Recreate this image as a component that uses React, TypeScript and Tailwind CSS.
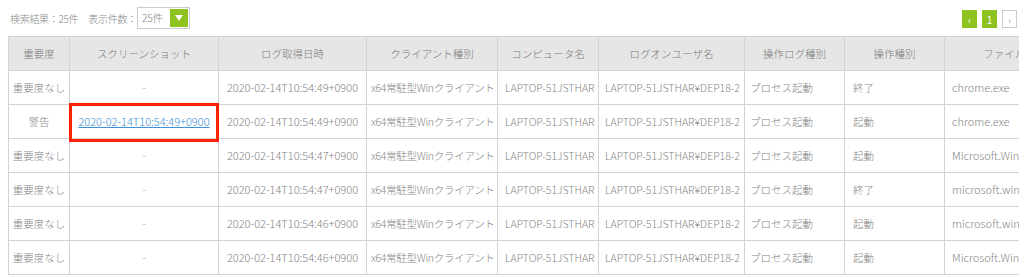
import React from "react";

const cols = [
  { name: "重要度", w: 61 },
  { name: "スクリーンショット", w: 149 },
  { name: "ログ取得日時", w: 148 },
  { name: "クライアント種別", w: 131 },
  { name: "コンピュータ名", w: 101 },
  { name: "ログオンユーザ名", w: 146 },
  { name: "操作ログ種別", w: 100 },
  { name: "操作種別", w: 100 },
  { name: "ファイル名", w: 130 },
];

const rows = [
  ["重要度なし", "-", "2020-02-14T10:54:49+0900", "終了", "chrome.exe"],
  ["警告", "LINK", "2020-02-14T10:54:49+0900", "起動", "chrome.exe"],
  ["重要度なし", "-", "2020-02-14T10:54:47+0900", "起動", "Microsoft.Windows.ShellExperienceHost"],
  ["重要度なし", "-", "2020-02-14T10:54:47+0900", "終了", "microsoft.windows.photos"],
  ["重要度なし", "-", "2020-02-14T10:54:46+0900", "起動", "microsoft.windows.photos"],
  ["重要度なし", "-", "2020-02-14T10:54:46+0900", "起動", "Microsoft.Windows.Photos"],
];

const font = { fontFamily: '"Noto Sans CJK JP", "Noto Sans", sans-serif' };

export default function App() {
  return (
    <div
      className="relative w-[1024px] h-[277px] overflow-hidden bg-white text-[#858585] font-light"
      style={font}
    >
      <div className="flex items-center justify-between h-[36px] pl-[10px] pr-[7px]">
        <div className="flex items-center text-[10px] text-[#8a8a8a] tracking-[-0.3px]">
          <span>検索結果：25件</span>
          <span className="ml-[10px]">表示件数：</span>
          <div className="ml-[0px] flex items-center w-[53px] h-[22px] border border-[#ccc] bg-white">
            <span className="flex-1 pl-[4px] text-[10.5px] text-[#888]">25件</span>
            <div className="w-[18px] h-[18px] mr-[1px] bg-[#8dc21f] flex items-center justify-center">
              <svg width="10" height="8" viewBox="0 0 10 8">
                <path d="M1 1 L9 1 L5 7 Z" fill="#fff" />
              </svg>
            </div>
          </div>
        </div>
        <div className="flex items-center gap-[5px] text-[10px] font-normal mt-[2px]">
          <div className="w-[15px] h-[18px] bg-[#8dc21f] text-white flex items-center justify-center">‹</div>
          <div className="w-[15px] h-[18px] bg-[#8dc21f] text-white flex items-center justify-center">1</div>
          <div className="w-[15px] h-[18px] bg-white border border-[#ccc] text-[#aaa] flex items-center justify-center">›</div>
        </div>
      </div>
      <div className="ml-[8px] w-[1011px] overflow-hidden">
        <table
          className="border-collapse table-fixed text-[10.5px]"
          style={{ width: 1066 }}
        >
          <colgroup>
            {cols.map((c, i) => (
              <col key={i} style={{ width: c.w }} />
            ))}
          </colgroup>
          <thead>
            <tr className="h-[34px] bg-[#e6e6e6]">
              {cols.map((c, i) => (
                <th
                  key={i}
                  className="border border-[#d3d3d3] font-light text-[#7a7a7a] text-[10.5px] text-center whitespace-nowrap overflow-hidden"
                >
                  {c.name}
                </th>
              ))}
            </tr>
          </thead>
          <tbody>
            {rows.map((r, i) => (
              <tr key={i} className="h-[34px]">
                <td className="border border-[#d3d3d3] text-center whitespace-nowrap">{r[0]}</td>
                <td className="border border-[#d3d3d3] text-center whitespace-nowrap text-[11px]">
                  {r[1] === "LINK" ? (
                    <span className="text-[#3d8fd6] underline">2020-02-14T10:54:49+0900</span>
                  ) : (
                    <span className="text-[#aaa]">-</span>
                  )}
                </td>
                <td className="border border-[#d3d3d3] text-center whitespace-nowrap text-[11px]">{r[2]}</td>
                <td className="border border-[#d3d3d3] pl-[4px] whitespace-nowrap overflow-hidden tracking-[-0.3px]">x64常駐型Winクライアント</td>
                <td className="border border-[#d3d3d3] pl-[7px] whitespace-nowrap overflow-hidden">LAPTOP-51JSTHAR</td>
                <td className="border border-[#d3d3d3] pl-[6px] whitespace-nowrap overflow-hidden">LAPTOP-51JSTHAR¥DEP18-2</td>
                <td className="border border-[#d3d3d3] pl-[5px] whitespace-nowrap">プロセス起動</td>
                <td className="border border-[#d3d3d3] pl-[8px] whitespace-nowrap">{r[3]}</td>
                <td className="border border-[#d3d3d3] pl-[7px] whitespace-nowrap overflow-hidden text-[11px]">{r[4]}</td>
              </tr>
            ))}
          </tbody>
        </table>
      </div>
      <div className="absolute left-[69px] top-[103px] w-[150px] h-[39px] border-[3px] border-[#ff2200]" />
    </div>
  );
}
